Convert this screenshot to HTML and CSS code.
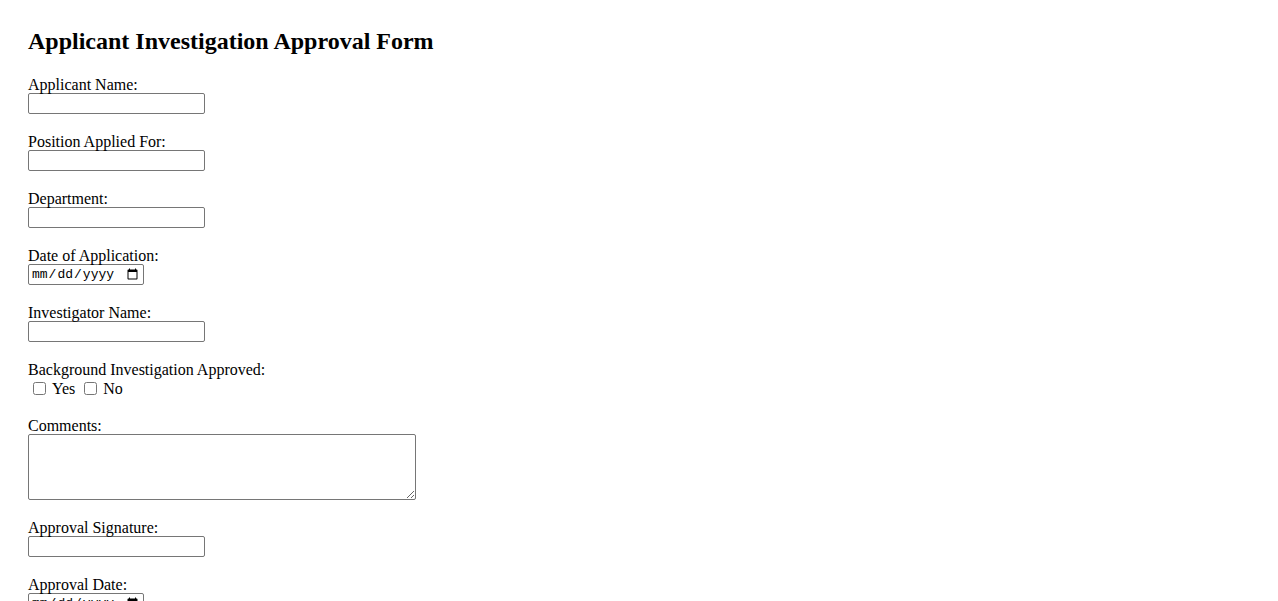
FILE: index.html
```html
<!DOCTYPE html>
<html lang="en">
<head>
    <meta charset="UTF-8">
    <meta name="viewport" content="width=device-width, initial-scale=1.0">
    <title>Applicant Investigation Approval Form</title>
    <link rel="stylesheet" href="styles.css">
</head>
<body>
    <h1>Applicant Investigation Approval Form</h1>
    <form>
        <div class="field">
            <label for="applicantName">Applicant Name:</label>
            <input type="text" id="applicantName">
        </div>
        <div class="field">
            <label for="position">Position Applied For:</label>
            <input type="text" id="position">
        </div>
        <div class="field">
            <label for="department">Department:</label>
            <input type="text" id="department">
        </div>
        <div class="field">
            <label for="applicationDate">Date of Application:</label>
            <input type="date" id="applicationDate">
        </div>
        <div class="field">
            <label for="investigatorName">Investigator Name:</label>
            <input type="text" id="investigatorName">
        </div>
        <div class="field">
            <label>Background Investigation Approved:</label>
            <div class="checks">
                <input type="checkbox" id="approvedYes"><span class="check-text">Yes</span>
                <input type="checkbox" id="approvedNo"><span class="check-text">No</span>
            </div>
        </div>
        <div class="field">
            <label for="comments">Comments:</label>
            <textarea id="comments"></textarea>
        </div>
        <div class="field">
            <label for="signature">Approval Signature:</label>
            <input type="text" id="signature">
        </div>
        <div class="field">
            <label for="approvalDate">Approval Date:</label>
            <input type="date" id="approvalDate">
        </div>
    </form>
</body>
</html>
```

FILE: styles.css
```css
body {
    font-family: "Liberation Serif", "Times New Roman", serif;
    font-size: 16px;
    margin: 0;
    padding: 28px;
    color: #000;
    background: #fff;
}
h1 {
    font-size: 24px;
    margin: 0 0 20px;
    line-height: 27px;
}
.field {
    margin-bottom: 18px;
}
label {
    display: block;
    line-height: 17px;
    padding-top: 1px;
}
input[type="text"], input[type="date"], textarea {
    display: block;
    box-sizing: border-box;
    margin: 0;
    border: 1px solid #767676;
    border-radius: 2px;
    height: 21px;
}
input[type="text"] {
    width: 177px;
}
input[type="date"] {
    width: 116px;
    padding: 0 2px;
    font-family: "Liberation Mono", monospace;
    font-size: 13px;
}
textarea {
    width: 388px;
    height: 66px;
}
.checks {
    line-height: 19px;
    height: 19px;
    padding-top: 1px;
}
.checks input {
    width: 13px;
    height: 13px;
    margin: 0 6px 0 5px;
    vertical-align: -1px;
}
```
